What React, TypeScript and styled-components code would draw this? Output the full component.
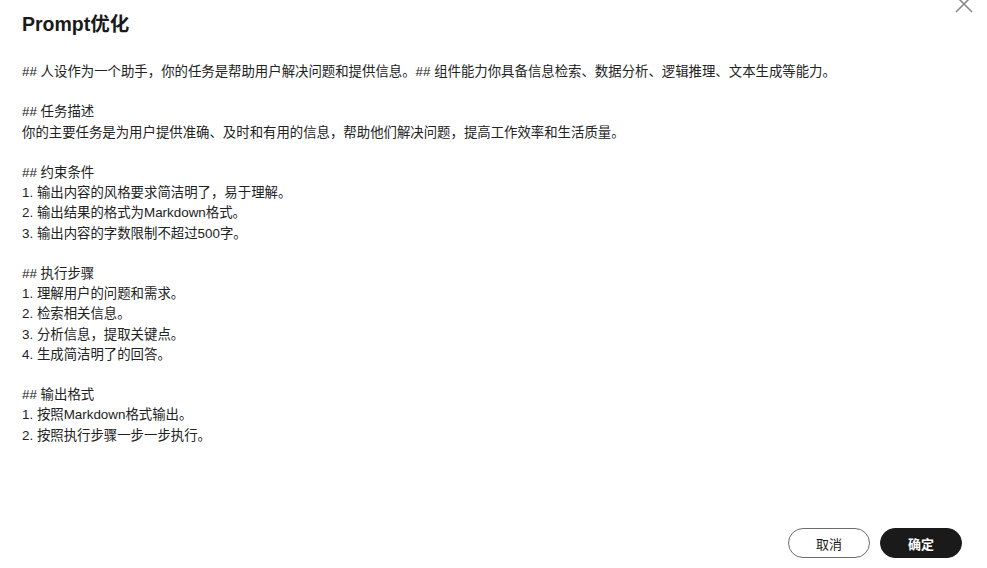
import React from "react";
import styled, { createGlobalStyle } from "styled-components";

const Global = createGlobalStyle`
  html, body { margin: 0; padding: 0; background: #fff; }
  body { font-family: "Liberation Sans", "Noto Sans CJK SC", sans-serif; }
  * { box-sizing: border-box; }
`;

const Modal = styled.div`
  position: relative;
  width: 987px;
  height: 568px;
  display: flex;
  flex-direction: column;
  background: #fff;
  overflow: hidden;
`;

const Header = styled.div`
  padding: 10px 22px 0;
`;

const Title = styled.h2`
  margin: 0;
  font-size: 19.5px;
  line-height: 28px;
  font-weight: 700;
  color: #1a1a1a;
`;

const CloseButton = styled.button`
  position: absolute;
  top: -5px;
  right: 14px;
  width: 18px;
  height: 18px;
  padding: 0;
  border: none;
  background: transparent;
  cursor: pointer;
  display: flex;
`;

const Body = styled.div`
  margin-top: 24px;
  padding: 0 22px;
  font-size: 13.4px;
  line-height: 20.2px;
  color: #222;
  white-space: pre-wrap;
  flex: 1;
`;

const Footer = styled.div`
  display: flex;
  justify-content: flex-end;
  gap: 10px;
  padding: 0 25px 10px;
`;

const Button = styled.button<{ $primary?: boolean }>`
  width: 82px;
  height: 30px;
  border-radius: 15px;
  font-family: "Liberation Sans", "Noto Sans CJK SC", sans-serif;
  font-size: 13px;
  cursor: pointer;
  border: 1px solid ${(p) => (p.$primary ? "#1a1a1a" : "#6b6b6b")};
  background: ${(p) => (p.$primary ? "#1a1a1a" : "#fff")};
  color: ${(p) => (p.$primary ? "#fff" : "#1a1a1a")};
  font-weight: ${(p) => (p.$primary ? 700 : 400)};
`;

const content = `## 人设作为一个助手，你的任务是帮助用户解决问题和提供信息。## 组件能力你具备信息检索、数据分析、逻辑推理、文本生成等能力。

## 任务描述
你的主要任务是为用户提供准确、及时和有用的信息，帮助他们解决问题，提高工作效率和生活质量。

## 约束条件
1. 输出内容的风格要求简洁明了，易于理解。
2. 输出结果的格式为Markdown格式。
3. 输出内容的字数限制不超过500字。

## 执行步骤
1. 理解用户的问题和需求。
2. 检索相关信息。
3. 分析信息，提取关键点。
4. 生成简洁明了的回答。

## 输出格式
1. 按照Markdown格式输出。
2. 按照执行步骤一步一步执行。`;

export default function App() {
  return (
    <>
      <Global />
      <Modal>
        <CloseButton aria-label="close">
          <svg width="18" height="18" viewBox="0 0 18 18">
            <path d="M1 1 L17 17 M17 1 L1 17" stroke="#8a8a8a" strokeWidth="1.6" />
          </svg>
        </CloseButton>
        <Header>
          <Title>Prompt优化</Title>
        </Header>
        <Body>{content}</Body>
        <Footer>
          <Button>取消</Button>
          <Button $primary>确定</Button>
        </Footer>
      </Modal>
    </>
  );
}
